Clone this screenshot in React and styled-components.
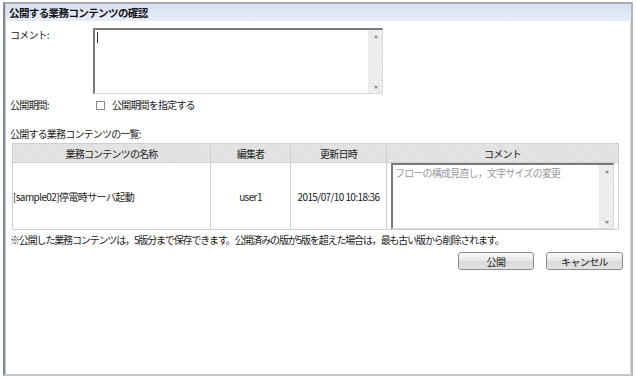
import React from "react";
import styled, { createGlobalStyle } from "styled-components";

const Global = createGlobalStyle`
  html, body { margin: 0; padding: 0; background: #ffffff; }
  body { font-family: "Noto Sans CJK JP", "Liberation Sans", sans-serif; color: #1a1a1a; }
`;

const Frame = styled.div`
  box-sizing: border-box;
  margin: 2px 0 0 3px;
  width: 630px;
  height: 374px;
  border-top: 2px solid #a9a9a9;
  border-left: 2px solid #7e8899;
  border-right: 2px solid #b4b4b4;
  border-bottom: 2px solid #c6c6c6;
  box-shadow: inset 1px 0 0 #c8cdd6, inset -1px 0 0 #dcdcdc;
  display: flex;
  flex-direction: column;
`;

const TitleBar = styled.div`
  height: 17px;
  margin-left: 1px;
  padding-left: 3px;
  display: flex;
  align-items: center;
  background: linear-gradient(#d9e0f3, #e8ecf8);
  font-size: 10.5px;
  font-weight: bold;
  letter-spacing: -0.6px;
  color: #111;
`;

const Body = styled.div`
  padding: 7px 0 0 5px;
  display: flex;
  flex-direction: column;
`;

const FormRow = styled.div`
  display: grid;
  grid-template-columns: 83px 1fr;
  align-items: ${(p) => (p.$center ? "center" : "start")};
  margin-top: ${(p) => p.$mt || 0}px;
`;

const Label = styled.div`
  font-size: 10px;
  letter-spacing: -0.8px;
  line-height: 12px;
  padding-top: ${(p) => p.$pt || 0}px;
`;

const TextBox = styled.div`
  box-sizing: border-box;
  width: ${(p) => p.$w}px;
  height: ${(p) => p.$h}px;
  border-top: 2px solid #7a7a7a;
  border-left: 2px solid #7a7a7a;
  border-right: 1px solid #d8d8d8;
  border-bottom: 1px solid #d8d8d8;
  background: #fff;
  display: flex;
`;

const TextArea = styled.div`
  flex: 1;
  padding: 2px 2px;
  font-size: 10px;
  letter-spacing: -0.8px;
  line-height: 12px;
  color: #9a9a9a;
`;

const Caret = styled.div`
  width: 1px;
  height: 11px;
  background: #333;
`;

const Scroll = styled.div`
  width: 13px;
  background: repeating-linear-gradient(45deg, #f1f1f1 0 1px, #e9e9e9 1px 2px);
  border-left: 1px solid #ececec;
  display: flex;
  flex-direction: column;
  justify-content: space-between;
  align-items: center;
  padding: 5px 0 4px;
`;

const Arrow = styled.div`
  width: 0;
  height: 0;
  border-left: 2.5px solid transparent;
  border-right: 2.5px solid transparent;
  ${(p) =>
    p.$down
      ? "border-top: 3px solid #8a8a8a;"
      : "border-bottom: 3px solid #8a8a8a;"}
`;

const CheckLine = styled.label`
  display: flex;
  align-items: center;
  gap: 7px;
  padding-left: 3px;
  font-size: 10px;
  letter-spacing: -0.8px;
  line-height: 12px;
`;

const Box = styled.span`
  box-sizing: border-box;
  width: 9px;
  height: 9px;
  border: 1px solid #8a8a8a;
  background: #fff;
`;

const SectionTitle = styled.div`
  margin-top: 17px;
  font-size: 10px;
  letter-spacing: -0.8px;
  line-height: 12px;
`;

const Table = styled.div`
  box-sizing: border-box;
  margin: 3px 0 0 2px;
  width: 607px;
  display: grid;
  grid-template-columns: 198px 80px 96px 1fr;
  grid-template-rows: 19px 67px;
  border-left: 1px solid #cfcfcf;
  border-top: 1px solid #cfcfcf;
`;

const Head = styled.div`
  display: flex;
  align-items: center;
  justify-content: center;
  border-right: 1px solid #cfcfcf;
  border-bottom: 1px solid #cfcfcf;
  background: repeating-linear-gradient(45deg, #e6e6e6 0 1px, #dedede 1px 2px);
  font-size: 10px;
  letter-spacing: -0.8px;
`;

const Cell = styled.div`
  display: flex;
  align-items: center;
  justify-content: ${(p) => (p.$left ? "flex-start" : "center")};
  padding: ${(p) => (p.$pad ? "0 4px" : "0")};
  border-right: 1px solid #cfcfcf;
  border-bottom: 1px solid #cfcfcf;
  font-size: 10px;
  letter-spacing: -0.6px;
  white-space: nowrap;
`;

const Note = styled.div`
  margin-top: 4px;
  font-size: 10px;
  letter-spacing: -1.15px;
  line-height: 12px;
  white-space: nowrap;
`;

const Buttons = styled.div`
  display: flex;
  justify-content: flex-end;
  gap: 12px;
  margin-top: 6px;
  padding-right: 8px;
`;

const Button = styled.button`
  box-sizing: border-box;
  width: ${(p) => p.$w}px;
  height: 18px;
  border: 1px solid #8c8c8c;
  border-radius: 3px;
  background: linear-gradient(#f8f8f8, #e6e6e6 50%, #d9d9d9 51%, #e2e2e2);
  font-family: "Noto Sans CJK JP", sans-serif;
  font-size: 10px;
  letter-spacing: -0.6px;
  color: #222;
  padding: 0;
`;

export default function App() {
  return (
    <>
      <Global />
      <Frame>
        <TitleBar>公開する業務コンテンツの確認</TitleBar>
        <Body>
          <FormRow>
            <Label $pt={1}>コメント:</Label>
            <TextBox $w={290} $h={66}>
              <TextArea>
                <Caret />
              </TextArea>
              <Scroll>
                <Arrow />
                <Arrow $down />
              </Scroll>
            </TextBox>
          </FormRow>
          <FormRow $center $mt={5}>
            <Label>公開期間:</Label>
            <CheckLine>
              <Box />
              公開期間を指定する
            </CheckLine>
          </FormRow>
          <SectionTitle>公開する業務コンテンツの一覧:</SectionTitle>
          <Table>
            <Head>業務コンテンツの名称</Head>
            <Head>編集者</Head>
            <Head>更新日時</Head>
            <Head>コメント</Head>
            <Cell $left>[sample02]停電時サーバ起動</Cell>
            <Cell>user1</Cell>
            <Cell>2015/07/10 10:18:36</Cell>
            <Cell>
              <TextBox $w={223} $h={66}>
                <TextArea>フローの構成見直し，文字サイズの変更</TextArea>
                <Scroll>
                  <Arrow />
                  <Arrow $down />
                </Scroll>
              </TextBox>
            </Cell>
          </Table>
          <Note>
            ※公開した業務コンテンツは，5版分まで保存できます。公開済みの版が5版を超えた場合は，最も古い版から削除されます。
          </Note>
          <Buttons>
            <Button $w={76}>公開</Button>
            <Button $w={77}>キャンセル</Button>
          </Buttons>
        </Body>
      </Frame>
    </>
  );
}
